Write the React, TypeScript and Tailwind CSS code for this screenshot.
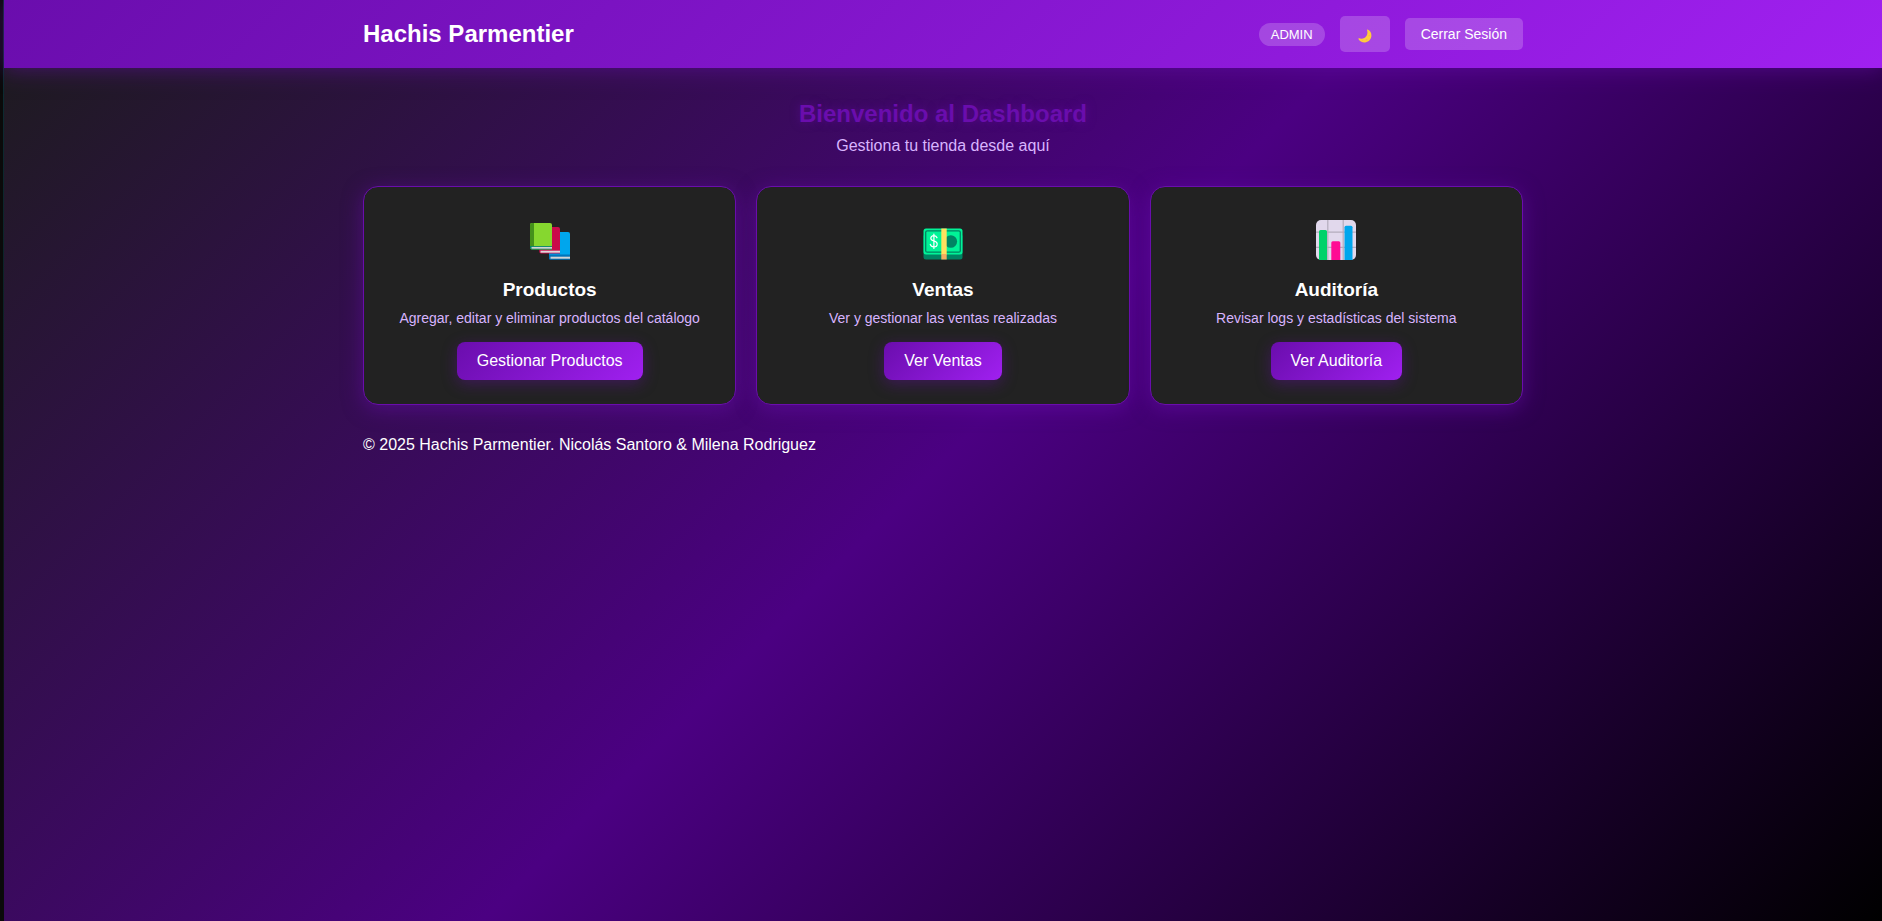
import type { ReactNode } from "react";

function MoonIcon() {
  return (
    <svg width="14" height="14" viewBox="0 0 14 14" aria-hidden="true" className="mt-1">
      <path d="M9.6 0.5C12.2 1.6 13.6 4 13.4 7C13.1 10.6 10.3 13.3 6.9 13.4C4 13.5 1.6 12.2 0.4 9.9C0.2 9.4 0.6 9.1 1.1 9.3C4.2 10.2 7.1 9.2 8.6 6.7C9.7 4.9 9.6 3 9 1.1C8.9 0.6 9.2 0.4 9.6 0.5Z" fill="#ffcd3c" />
      <circle cx="11.2" cy="6.6" r="0.7" fill="#f3ad61" />
      <circle cx="8.6" cy="10.8" r="0.8" fill="#f3ad61" />
      <circle cx="4.6" cy="11.6" r="0.5" fill="#f3ad61" />
    </svg>
  );
}

function BooksIcon() {
  return (
    <svg width="40" height="40" viewBox="0 0 40 40" aria-hidden="true">
      <path d="M21 12H38a2 2 0 0 1 2 2V37H19V14a2 2 0 0 1 2-2Z" fill="#00a6ed" />
      <path d="M19 34.5H40V39.7H20.5a1.5 1.5 0 0 1-1.5-1.5Z" fill="#0074ba" />
      <path d="M20.5 36.7H40V38.7H20.5Z" fill="#d3d3d3" />
      <path d="M11 7H28a2 2 0 0 1 2 2V33.5H11a1.7 1.7 0 0 1-1.7-1.7V7Z" fill="#ca0b4a" />
      <path d="M10.5 30.7H30V32.7H10.5Z" fill="#dcd9dc" />
      <path d="M2 3H20a2 2 0 0 1 2 2V29.5H2a2 2 0 0 1-2-2V5a2 2 0 0 1 2-2Z" fill="#86d72f" />
      <path d="M2 3H4V27H0V5a2 2 0 0 1 2-2Z" fill="#44911b" />
      <path d="M0 26H22V29.5H2a2 2 0 0 1-2-2Z" fill="#008463" />
      <path d="M1.5 26.9H22V28.7H1.5Z" fill="#d3d3d3" />
    </svg>
  );
}

function MoneyIcon() {
  return (
    <svg width="40" height="40" viewBox="0 0 40 40" aria-hidden="true">
      <rect x="0.5" y="14" width="39" height="25.5" rx="2.5" fill="#008463" />
      <rect x="0.5" y="8.5" width="39" height="26" rx="2.5" fill="#00f397" />
      <rect x="2.7" y="10.8" width="34.6" height="21.4" rx="1.5" fill="none" stroke="#008463" strokeWidth="1.3" />
      <circle cx="27.8" cy="21.5" r="6.3" fill="#008463" />
      <path d="M14 17.8C13.5 16.2 12.4 15.6 10.9 15.6C9 15.6 7.8 16.7 7.8 18.2C7.8 21.8 14.2 20 14.2 24C14.2 25.9 12.8 26.9 10.9 26.9C9.1 26.9 7.7 26 7.3 24.3M10.9 14V28.5" fill="none" stroke="#ffffff" strokeWidth="1.2" strokeLinecap="round" />
      <rect x="18.3" y="8.5" width="5.4" height="26" fill="#ffe05f" />
      <rect x="18.3" y="34" width="5.4" height="5.5" fill="#f3ad61" />
    </svg>
  );
}

function ChartIcon() {
  return (
    <svg width="40" height="40" viewBox="0 0 40 40" aria-hidden="true">
      <rect width="40" height="40" rx="5" fill="#e1d8ec" />
      <path d="M11.8 0V40M27.2 0V40M0 12.2H40M0 27.4H40" stroke="#b4acbc" strokeWidth="1.2" fill="none" />
      <path d="M3 40V11.5a1.5 1.5 0 0 1 1.5-1.5h5a1.5 1.5 0 0 1 1.5 1.5V40Z" fill="#00d26a" />
      <path d="M15.3 40V22.7a1.5 1.5 0 0 1 1.5-1.5h6a1.5 1.5 0 0 1 1.5 1.5V40Z" fill="#ff0c94" />
      <path d="M28.5 40V7.3a1.5 1.5 0 0 1 1.5-1.5h5a1.5 1.5 0 0 1 1.5 1.5V40Z" fill="#00a6ed" />
    </svg>
  );
}

type Card = { icon: ReactNode; title: string; text: string; action: string };

const cards: Card[] = [
  {
    icon: <BooksIcon />,
    title: "Productos",
    text: "Agregar, editar y eliminar productos del catálogo",
    action: "Gestionar Productos",
  },
  {
    icon: <MoneyIcon />,
    title: "Ventas",
    text: "Ver y gestionar las ventas realizadas",
    action: "Ver Ventas",
  },
  {
    icon: <ChartIcon />,
    title: "Auditoría",
    text: "Revisar logs y estadísticas del sistema",
    action: "Ver Auditoría",
  },
];

export default function App() {
  return (
    <div className="border-l-3 border-[#0a0a0a] bg-[linear-gradient(180deg,#0c2f35,#0a0a0a)] pl-px">
      <div className="min-h-screen bg-[linear-gradient(135deg,#1c1c1c_0%,#4b0082_50%,#000000_100%)] font-['Liberation_Sans',Arial,sans-serif] text-base text-white">
        <header className="bg-[linear-gradient(135deg,#6a0dad,#a020f0)] py-4 shadow-[0_2px_20px_rgba(106,13,173,0.5)]">
          <div className="mx-auto flex max-w-[1200px] items-center justify-between px-5">
            <h1 className="text-2xl font-bold">Hachis Parmentier</h1>
            <div className="flex items-center gap-[15px]">
              <span className="rounded-full bg-white/20 px-3 py-1 text-[13px] leading-[15px]">ADMIN</span>
              <button type="button" aria-label="Cambiar tema" className="flex h-9 w-[50px] items-center justify-center rounded-[5px] bg-white/20">
                <MoonIcon />
              </button>
              <button type="button" className="rounded-[5px] bg-white/20 px-4 py-2 text-sm leading-4">
                Cerrar Sesión
              </button>
            </div>
          </div>
        </header>
        <div className="mx-auto max-w-[1200px] px-5 py-[30px]">
          <main>
            <section className="mb-7 text-center">
              <h2 className="text-2xl font-bold text-[#6a0dad] [text-shadow:0_0_10px_rgba(106,13,173,0.5)]">Bienvenido al Dashboard</h2>
              <p className="mt-1 text-[#d8b4fe]">Gestiona tu tienda desde aquí</p>
            </section>
            <section className="grid gap-5 md:grid-cols-3">
              {cards.map((card) => (
                <article
                  key={card.title}
                  className="flex flex-col items-center rounded-[15px] border border-[#6a0dad] bg-[#222222] px-5 pt-[25px] pb-6 text-center shadow-[0_4px_20px_rgba(106,13,173,0.5)]"
                >
                  <div className="flex h-14 items-center">{card.icon}</div>
                  <h3 className="mt-2 text-[19px] leading-7 font-bold">{card.title}</h3>
                  <p className="mt-1 text-sm text-[#d8b4fe]">{card.text}</p>
                  <button
                    type="button"
                    className="mt-[14px] rounded-lg bg-[linear-gradient(135deg,#6a0dad,#a020f0)] px-5 py-[10px] leading-[18px] shadow-[0_4px_15px_rgba(106,13,173,0.4)]"
                  >
                    {card.action}
                  </button>
                </article>
              ))}
            </section>
          </main>
          <footer className="mt-7">
            <p>© 2025 Hachis Parmentier. Nicolás Santoro &amp; Milena Rodriguez</p>
          </footer>
        </div>
      </div>
    </div>
  );
}
